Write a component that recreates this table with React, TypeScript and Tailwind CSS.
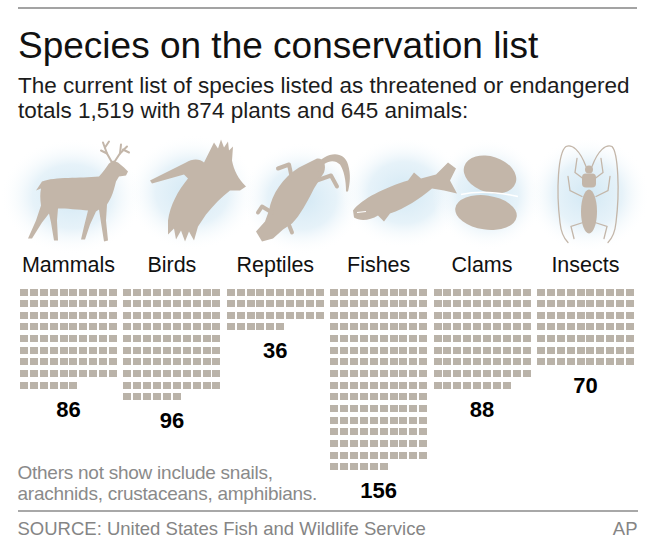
import React from 'react';

interface Group {
  name: string;
  count: number;
  place: string;
}

const groups: Group[] = [
  { name: 'Mammals', count: 86, place: 'col-start-1 row-start-1' },
  { name: 'Birds', count: 96, place: 'col-start-2 row-start-1' },
  { name: 'Reptiles', count: 36, place: 'col-start-3 row-start-1' },
  { name: 'Fishes', count: 156, place: 'col-start-4 row-start-1 row-span-2' },
  { name: 'Clams', count: 88, place: 'col-start-5 row-start-1' },
  { name: 'Insects', count: 70, place: 'col-start-6 row-start-1' },
];

const SHAPE = '#c3b6a9';

function AnimalStrip() {
  return (
    <svg width="650" height="130" viewBox="0 122.5 650 130" className="block">
      <defs>
        <radialGradient id="glow" cx="50%" cy="50%" r="50%">
          <stop offset="0%" stopColor="#d2e8f4" stopOpacity="1" />
          <stop offset="55%" stopColor="#deeef7" stopOpacity="0.75" />
          <stop offset="100%" stopColor="#ffffff" stopOpacity="0" />
        </radialGradient>
      </defs>
      {/* soft blue halos */}
      <ellipse cx="72" cy="196" rx="72" ry="58" fill="url(#glow)" />
      <ellipse cx="192" cy="192" rx="66" ry="58" fill="url(#glow)" />
      <ellipse cx="302" cy="198" rx="62" ry="56" fill="url(#glow)" />
      <ellipse cx="404" cy="192" rx="64" ry="56" fill="url(#glow)" />
      <ellipse cx="488" cy="194" rx="56" ry="56" fill="url(#glow)" />
      <ellipse cx="588" cy="194" rx="62" ry="58" fill="url(#glow)" />

      {/* deer */}
      <path
        fill={SHAPE}
        d="M36 190 L42 181 C55 176 80 178 99 176 C103 172 106 167 109 163 L113 160 L118 162 L124 167 L128 171 L126 175 L119 176 L116 181 C114 189 112 197 107 204 L106 220 L108 240 L104 241 L101 222 L99 209 L96 211 L90 224 L85 239 L81 239 L84 226 L88 210 C80 209 65 208 58 208 L57 220 L58 240 L54 240 L51 222 L49 213 L42 222 L32 238 L28 238 L36 220 L41 205 C40 198 40 193 41 188 Z"
      />
      <g stroke={SHAPE} strokeWidth="2" fill="none" strokeLinecap="round">
        <path d="M112 162 L107 153 L103 142" />
        <path d="M107 153 L101 150" />
        <path d="M105 147 L109 141" />
        <path d="M114 162 L120 153 L127 146" />
        <path d="M120 153 L121 144" />
        <path d="M123 149 L129 152" />
      </g>

      {/* pelican */}
      <path
        fill={SHAPE}
        d="M150 180 L186 162 C192 158 200 158 204 162 L210 150 L214 142 L218 148 L221 139 L224 147 L228 141 L229 150 L233 146 L232 160 C234 170 238 178 246 186 L240 190 L230 190 C222 196 214 204 206 214 L198 226 L194 240 L189 231 L185 241 L181 230 L176 239 L174 228 L168 234 L168 220 C170 205 178 190 188 178 L184 174 L152 183 Z"
      />

      {/* lizard */}
      <g fill={SHAPE}>
        <path d="M262 241 L256 231 L265 221 L269 210 C272 193 283 177 299 167 L317 158 C323 157 327 164 324 172 L314 188 C307 202 300 215 292 223 L283 229 L273 238 Z" />
        <path d="M314 167 C326 150 344 150 348 164 C351 174 350 183 348 191 L346 191 C346 180 344 170 340 164 C334 158 324 160 318 171 Z" />
      </g>
      <g stroke={SHAPE} fill="none" strokeLinecap="round" strokeLinejoin="round" strokeWidth="4">
        <path d="M292 178 L289 164 L278 168" />
        <path d="M272 212 L262 206 L258 212" />
        <path d="M314 181 L331 175 L337 186" />
        <path d="M288 222 L292 232" />
      </g>

      {/* salmon */}
      <path
        fill={SHAPE}
        d="M353 210 C362 198 385 187 408 180 L414 172 L421 178 L436 174 L448 162 L456 168 L450 180 L457 193 L444 190 L432 188 C420 198 405 208 390 213 L384 221 L378 215 C370 220 360 221 354 217 Z"
      />
      <path d="M357 212 L366 211" stroke="#ffffff" strokeWidth="1.2" />

      {/* clams */}
      <g fill={SHAPE}>
        <ellipse cx="490" cy="174" rx="27" ry="18" transform="rotate(18 490 174)" />
        <ellipse cx="486" cy="212" rx="31" ry="17" transform="rotate(8 486 212)" />
      </g>
      <path d="M461 194 C478 190 500 192 518 196" stroke="#ffffff" strokeWidth="1.5" fill="none" />

      {/* insect */}
      <g fill={SHAPE}>
        <ellipse cx="589" cy="169" rx="4" ry="4" />
        <rect x="582" y="173" width="14" height="14" rx="4" />
        <ellipse cx="589" cy="211" rx="8" ry="22" />
      </g>
      <g stroke={SHAPE} fill="none" strokeWidth="1.3" strokeLinecap="round">
        <path d="M586 166 C580 150 572 143 566 146 C558 152 556 190 560 222 C561 232 564 238 568 242" />
        <path d="M592 166 C598 150 606 143 612 146 C618 152 620 190 616 222 C615 232 612 238 608 242" />
        <path d="M583 178 L575 172 L577 158" />
        <path d="M595 178 L603 172 L601 158" />
        <path d="M582 196 L570 190 L568 176" />
        <path d="M596 196 L608 190 L610 176" />
        <path d="M583 222 L571 226 L574 238" />
        <path d="M595 222 L607 226 L604 238" />
      </g>
    </svg>
  );
}

function Cells({ count }: { count: number }) {
  return (
    <div className="grid grid-cols-[repeat(10,8px)] gap-x-[1.9px] gap-y-[4.67px]">
      {Array.from({ length: count }, (_, i) => (
        <div key={i} className="w-[8px] h-[7px] bg-[#bab3a9]" />
      ))}
    </div>
  );
}

export default function App() {
  return (
    <div className="w-[650px] h-[558px] overflow-hidden bg-white font-['Liberation_Sans',Arial,sans-serif]">
      <div className="pl-[18px] pr-[13px]">
        <div className="mt-[7px] h-[1.5px] bg-[#a3a3a3]" />
        <h1 className="mt-[18px] text-[37px] leading-[37px] font-normal text-[#111111] whitespace-nowrap">
          Species on the conservation list
        </h1>
        <p className="mt-[9px] text-[22.5px] leading-[25px] text-[#1c1c1c] whitespace-nowrap">
          The current list of species listed as threatened or endangered
          <br />
          totals 1,519 with 874 plants and 645 animals:
        </p>
      </div>

      <AnimalStrip />

      <div className="grid grid-cols-[repeat(6,97px)] gap-x-[6.4px] pl-[20px]">
        {groups.map((g) => (
          <div key={g.name} className="text-center text-[21.5px] leading-[24px] text-[#111111] whitespace-nowrap">
            {g.name}
          </div>
        ))}
      </div>

      <div className="mt-[12px] grid grid-cols-[repeat(6,97px)] gap-x-[6.4px] pl-[20px]">
        {groups.map((g) => (
          <div key={g.name} className={`${g.place} flex flex-col items-center`}>
            <Cells count={g.count} />
            <div className="mt-[10px] text-[22px] leading-[22px] font-bold text-black">{g.count}</div>
          </div>
        ))}
        <p className="col-start-1 col-span-3 row-start-2 self-end -ml-[2.5px] -mb-[1.4px] text-[19px] leading-[21px] tracking-[-0.25px] text-[#8a8a8a] whitespace-nowrap">
          Others not show include snails,
          <br />
          arachnids, crustaceans, amphibians.
        </p>
      </div>

      <div className="pl-[17.5px] pr-[12.5px]">
        <div className="mt-[8px] h-[1.5px] bg-[#a8a8a8]" />
        <div className="mt-[7.5px] flex justify-between text-[18.5px] leading-[20px] text-[#858585]">
          <span>SOURCE: United States Fish and Wildlife Service</span>
          <span>AP</span>
        </div>
      </div>
    </div>
  );
}
